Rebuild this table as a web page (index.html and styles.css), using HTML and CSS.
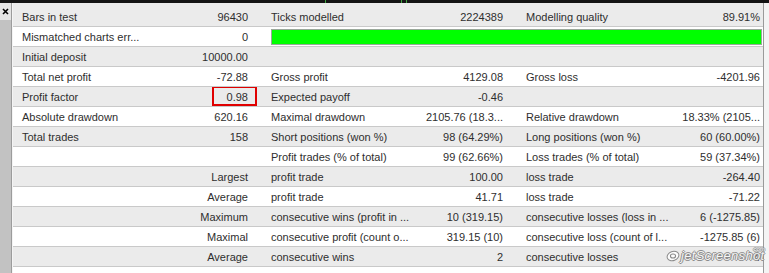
FILE: index.html
```html
<!DOCTYPE html>
<html>
<head>
<meta charset="utf-8">
<link rel="stylesheet" href="styles.css">
</head>
<body>
<div class="topbar"></div>
<div class="main">
  <div class="side">
    <div class="closebox">
      <svg width="7" height="7" viewBox="0 0 7 7"><path d="M1 1 L6 6 M6 1 L1 6" stroke="#000" stroke-width="1.6" fill="none"/></svg>
    </div>
  </div>
  <div class="report">
    <div class="spacer"></div>
    <div class="row alt">
      <div class="lbl">Bars in test</div><div class="val">96430</div>
      <div class="lbl">Ticks modelled</div><div class="val">2224389</div>
      <div class="lbl">Modelling quality</div><div class="val last">89.91%</div>
    </div>
    <div class="row">
      <div class="lbl">Mismatched charts err...</div><div class="val">0</div>
      <div class="barcell"><div class="bar"></div></div>
    </div>
    <div class="row alt">
      <div class="lbl">Initial deposit</div><div class="val">10000.00</div>
      <div class="lbl"></div><div class="val"></div>
      <div class="lbl"></div><div class="val last"></div>
    </div>
    <div class="row">
      <div class="lbl">Total net profit</div><div class="val">-72.88</div>
      <div class="lbl">Gross profit</div><div class="val">4129.08</div>
      <div class="lbl">Gross loss</div><div class="val last">-4201.96</div>
    </div>
    <div class="row alt">
      <div class="lbl">Profit factor</div><div class="val highlight">0.98</div>
      <div class="lbl">Expected payoff</div><div class="val">-0.46</div>
      <div class="lbl"></div><div class="val last"></div>
    </div>
    <div class="row">
      <div class="lbl">Absolute drawdown</div><div class="val">620.16</div>
      <div class="lbl">Maximal drawdown</div><div class="val">2105.76 (18.3...</div>
      <div class="lbl">Relative drawdown</div><div class="val last">18.33% (2105...</div>
    </div>
    <div class="row alt">
      <div class="lbl">Total trades</div><div class="val">158</div>
      <div class="lbl">Short positions (won %)</div><div class="val">98 (64.29%)</div>
      <div class="lbl">Long positions (won %)</div><div class="val last">60 (60.00%)</div>
    </div>
    <div class="row">
      <div class="lbl"></div><div class="val"></div>
      <div class="lbl">Profit trades (% of total)</div><div class="val">99 (62.66%)</div>
      <div class="lbl">Loss trades (% of total)</div><div class="val last">59 (37.34%)</div>
    </div>
    <div class="row alt">
      <div class="lbl"></div><div class="val">Largest</div>
      <div class="lbl">profit trade</div><div class="val">100.00</div>
      <div class="lbl">loss trade</div><div class="val last">-264.40</div>
    </div>
    <div class="row">
      <div class="lbl"></div><div class="val">Average</div>
      <div class="lbl">profit trade</div><div class="val">41.71</div>
      <div class="lbl">loss trade</div><div class="val last">-71.22</div>
    </div>
    <div class="row alt">
      <div class="lbl"></div><div class="val">Maximum</div>
      <div class="lbl">consecutive wins (profit in ...</div><div class="val">10 (319.15)</div>
      <div class="lbl">consecutive losses (loss in ...</div><div class="val last">6 (-1275.85)</div>
    </div>
    <div class="row">
      <div class="lbl"></div><div class="val">Maximal</div>
      <div class="lbl">consecutive profit (count o...</div><div class="val">319.15 (10)</div>
      <div class="lbl">consecutive loss (count of l...</div><div class="val last">-1275.85 (6)</div>
    </div>
    <div class="row alt">
      <div class="lbl"></div><div class="val">Average</div>
      <div class="lbl">consecutive wins</div><div class="val">2</div>
      <div class="lbl">consecutive losses</div><div class="val last">4</div>
    </div>
    <div class="watermark">
      <svg class="wm-logo" width="14" height="12" viewBox="0 0 14 12"><ellipse cx="7" cy="6" rx="6" ry="4.6" fill="rgba(255,255,255,0.85)" stroke="#8a8a8a" stroke-width="1" transform="rotate(-20 7 6)"/><ellipse cx="7" cy="6" rx="2.6" ry="2" fill="none" stroke="#8a8a8a" stroke-width="1.1"/></svg>
      <span class="wm-text">jetScreenshot</span><span class="wm-com">com</span>
    </div>
  </div>
  <div class="rightedge"></div>
</div>
</body>
</html>
```
FILE: styles.css
```css
html, body {
  margin: 0;
  padding: 0;
  background: #ffffff;
  overflow: hidden;
}
body {
  width: 769px;
  height: 273px;
  font-family: "Liberation Sans", Arial, sans-serif;
  font-size: 11px;
  color: #2e2e2e;
}
.topbar {
  height: 3px;
  background:
    linear-gradient(to right, transparent 325px, #3fa33f 325px, #3fa33f 326px, transparent 326px),
    linear-gradient(to right, transparent 401px, #3fa33f 401px, #3fa33f 402px, transparent 402px),
    linear-gradient(to right, transparent 406px, #3fa33f 406px, #3fa33f 407px, transparent 407px),
    #141414;
}
.main {
  display: flex;
  height: 270px;
}
.side {
  width: 11px;
  background: #c2c2c2;
  border-right: 1px solid #9c9c9c;
  flex: none;
}
.closebox {
  height: 17px;
  background: #e4e4e4;
  display: flex;
  justify-content: center;
  padding-top: 5px;
  box-sizing: border-box;
}
.closebox svg { display: block; }
.report {
  position: relative;
  width: 750px;
  flex: none;
  border-left: 1px solid #f4f4f4;
  background: #ffffff;
}
.spacer {
  height: 4px;
  background: #ebebeb;
}
.row {
  display: grid;
  grid-template-columns: 137px 112px 156px 99px 156px 90px;
  height: 19px;
  line-height: 20px;
  border-bottom: 1px solid #c9c9c9;
  background: #ffffff;
}
.row.alt {
  background: #ebebeb;
}
.lbl, .val {
  white-space: nowrap;
  overflow: hidden;
}
.lbl {
  padding-left: 9px;
}
.val {
  text-align: right;
  padding-right: 14px;
}
.val.last {
  padding-right: 3px;
}
.highlight {
  position: relative;
}
.highlight::after {
  content: "";
  position: absolute;
  left: 62px;
  top: -1px;
  width: 41px;
  height: 16px;
  border: 2px solid #e00000;
}
.barcell {
  grid-column: 3 / span 4;
  padding: 2px 1px 1px 9px;
}
.bar {
  height: 14px;
  background: #00ff00;
  border: 1px solid #9aa89a;
}
.rightedge {
  flex: 1;
  border-left: 1px solid #9a9a9a;
  background: #f4f4f4;
}
.watermark {
  position: absolute;
  left: 653px;
  top: 245px;
  display: flex;
  align-items: center;
  gap: 1px;
}
.wm-logo { display: block; }
.wm-text {
  font-family: "Liberation Sans", Arial, sans-serif;
  font-style: italic;
  font-size: 13px;
  letter-spacing: 0.3px;
  color: rgba(255, 255, 255, 0.92);
  text-shadow: 1px 0 0 #8c8c8c, -1px 0 0 #8c8c8c, 0 1px 0 #8c8c8c, 0 -1px 0 #8c8c8c;
}
.wm-com {
  font-size: 6px;
  align-self: flex-start;
  color: rgba(255, 255, 255, 0.92);
  text-shadow: 1px 0 0 #8c8c8c, -1px 0 0 #8c8c8c, 0 1px 0 #8c8c8c, 0 -1px 0 #8c8c8c;
  margin-left: -12px;
  margin-top: -2px;
}
```
